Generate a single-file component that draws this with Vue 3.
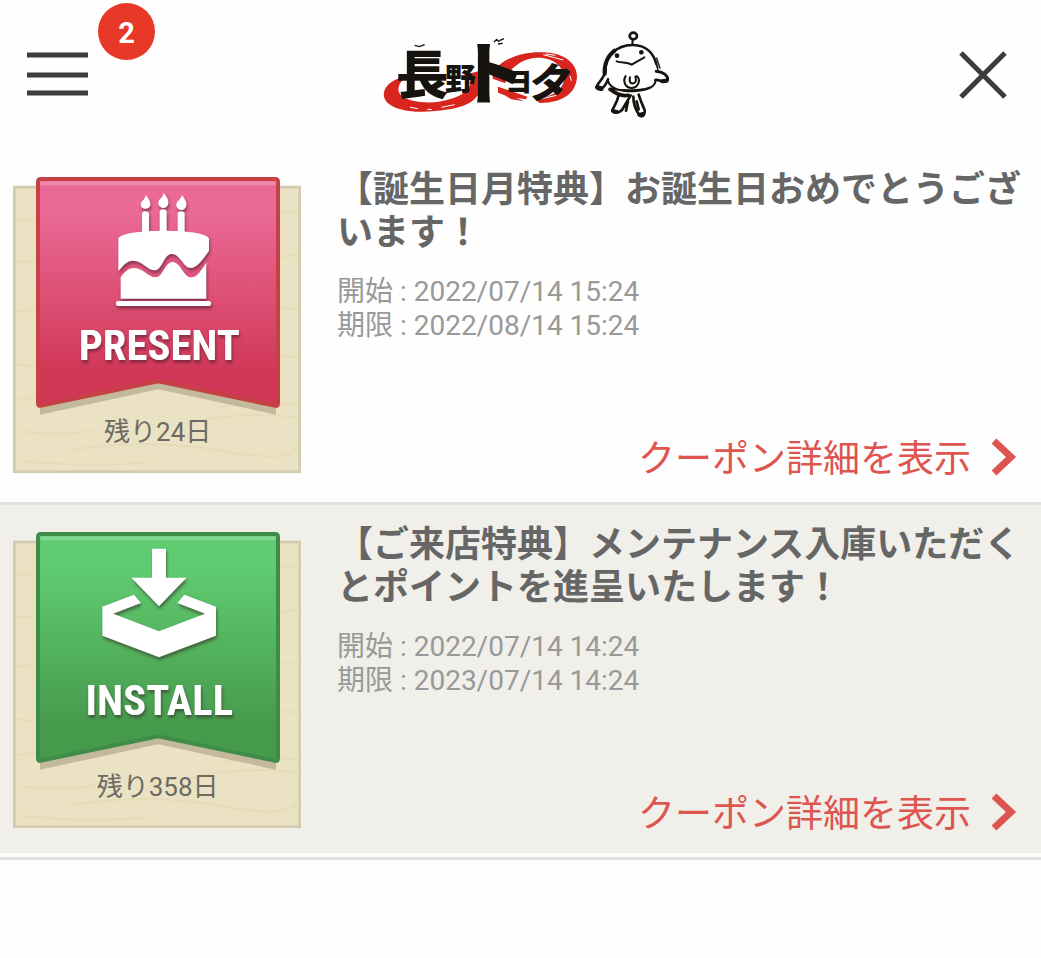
<template>
  <div class="page">
    <header class="header">
      <button class="icon-button" type="button" aria-label="メニュー">
        <svg width="61" height="46" viewBox="0 0 61 46" aria-hidden="true">
          <path d="M0 3h61M0 23h61M0 41h61" stroke="#3c3c3c" stroke-width="5" />
        </svg>
        <span class="count">2</span>
      </button>

      <svg class="logo" viewBox="12 0 897 330" role="img" aria-label="長野トヨタ">
        <g fill="#d8261f">
          <path d="M114 168C62 176 38 204 42 230C50 266 120 280 188 274C262 268 312 256 330 214L332 152L268 168L306 176L296 208C268 234 216 250 160 247C108 243 80 226 86 202C89 188 98 178 114 168Z" />
          <path d="M368 154C400 114 460 94 520 97C592 100 622 136 621 172C618 218 580 250 508 249L498 238C552 230 584 204 582 172C578 132 542 112 500 113C462 115 436 134 410 164L406 190L368 176Z" />
          <path d="M384 200L472 230L468 238L440 234L462 244L424 238L404 226L384 218Z" />
        </g>
        <g fill="none" stroke="#fff" stroke-width="3">
          <path d="M520 104L580 120M528 102L556 106M600 168l4 14M506 238L560 226M120 262l24 4M214 262l40-8M172 268l14 1" />
        </g>
        <g class="logo-text">
          <text x="78" y="222" font-size="158">長</text>
          <text x="225" y="210" font-size="92">野</text>
          <text x="262" y="238" font-size="206">ト</text>
          <text x="404" y="217" font-size="84">ヨ</text>
          <text x="468" y="234" font-size="124" font-style="italic">タ</text>
        </g>
        <path d="M134 76l14 4 16-6M372 66l8-8 8 8M388 62l14-6M384 72l14-2" fill="none" stroke="#17130f" stroke-width="4" />
        <g fill="none" stroke="#17130f" stroke-width="8" stroke-linecap="round" stroke-linejoin="round">
          <ellipse cx="790" cy="48" rx="11" ry="10" stroke-width="8" />
          <path d="M788 60L787 73" stroke-width="6" />
          <path d="M706 158C702 112 738 74 790 75C826 76 850 98 859 132" />
          <path d="M704 162C702 132 714 106 734 92" stroke-width="12" />
          <path d="M852 112l12 32M860 114l10 30M858 130l6 22" stroke-width="4" />
          <path d="M740 124C758 130 770 124 785 134L823 112" stroke-width="6" />
          <path d="M704 156C706 172 680 190 680 202C684 214 704 206 714 178" />
          <path d="M682 202l12 4" stroke-width="14" />
          <path d="M858 154C878 154 896 168 893 180C886 192 868 178 856 180" />
          <path d="M876 184l14-2" stroke-width="12" />
          <path d="M714 182C720 204 748 214 790 214C830 212 856 202 857 180M722 206C758 212 810 214 840 202" stroke-width="6" />
          <path d="M720 208C736 220 756 230 774 226" stroke-width="11" />
          <path d="M767 168C758 182 764 204 786 204C808 202 812 176 800 168M780 172C776 188 784 194 794 188C800 184 798 176 796 170" stroke-width="6" />
          <path d="M746 226C742 246 734 256 727 270C728 282 746 280 756 270L782 226M774 244L768 272" />
          <path d="M728 272l14 4" stroke-width="11" />
          <path d="M790 230C790 254 796 268 808 286C818 294 826 284 824 270C816 252 812 244 806 224M800 244l6 24" />
          <path d="M808 284l12-2" stroke-width="12" />
        </g>
        <circle cx="741" cy="107" r="7" fill="#17130f" />
        <circle cx="814" cy="97" r="7" fill="#17130f" />
      </svg>

      <button class="icon-button" type="button" aria-label="閉じる">
        <svg width="48" height="48" viewBox="0 0 48 48" aria-hidden="true">
          <path d="M2 2L46 46M46 2L2 46" stroke="#3c3c3c" stroke-width="5" />
        </svg>
      </button>
    </header>

    <main>
      <ul class="coupons">
        <li v-for="coupon in coupons" :key="coupon.kind" class="coupon">
          <article :class="['coupon__inner', `coupon--${coupon.kind}`]">
            <svg class="thumb" viewBox="39 49 864 888" role="img" :aria-label="coupon.label">
              <defs>
                <linearGradient :id="`fill-${coupon.kind}`" x1="0" y1="0" x2="0" y2="1">
                  <stop offset="0" :stop-color="coupon.colors[0]" />
                  <stop offset="0.15" :stop-color="coupon.colors[0]" />
                  <stop offset="0.85" :stop-color="coupon.colors[1]" />
                  <stop offset="1" :stop-color="coupon.colors[1]" />
                </linearGradient>
              </defs>
              <rect x="43" y="79" width="856" height="854" fill="#ebe2c4" stroke="#d3cab0" stroke-width="8" />
              <path class="grain" d="M48 180q30-8 60 0M48 300q30 10 60 0M48 455q30-10 60-2M48 610q30 8 60 2M842 150q26 10 50 0M842 290q26-12 50-2M842 440q26 12 50 0M842 590q26-8 50 4M50 720q90-24 200-8M60 810q100 18 220 0M200 870q240-40 460 0t230-14M560 790q150-40 330-20M60 900q200 20 380 6M660 740q120-20 230-8" />
              <path class="ribbon-shadow" d="M120 730V762L475 686L828 762V730L475 660Z" />
              <path
                d="M123 55H825Q834 55 834 64V728Q834 738 824 735L475 662L124 735Q114 738 114 728V64Q114 55 123 55Z"
                :fill="`url(#fill-${coupon.kind})`"
                :stroke="coupon.border"
                stroke-width="12"
              />
              <rect x="121" y="62" width="706" height="12" fill="#fff" opacity="0.22" />

              <g v-if="coupon.kind === 'present'" class="symbol">
                <path d="M437 103C450 118 452 128 451 134A15 15 0 0 1 422 132C422 120 436 118 437 103ZM491 96C504 112 506 122 505 128A15 15 0 0 1 475 126C475 114 490 112 491 96ZM545 103C558 118 560 128 559 134A15 15 0 0 1 529 132C529 120 544 118 545 103Z" />
                <path d="M426 160Q426 152 436 152Q447 152 447 160V216H426ZM479 154Q479 146 490 146Q500 146 500 154V216H479ZM533 160Q533 152 543 152Q554 152 554 160V216H533Z" />
                <path d="M355 235C356 202 626 202 627 235V270C608 298 590 322 572 322C550 322 540 280 516 280C490 280 488 329 464 329C442 329 426 300 400 300C378 300 368 318 355 332Z" />
                <path d="M362 350C376 330 388 322 402 322C430 322 446 350 466 350C490 350 494 304 518 304C542 304 550 350 574 350C592 350 604 328 619 306V414H362Z" />
                <rect x="348" y="421" width="285" height="15" rx="6" />
              </g>
              <g v-else class="symbol">
                <path d="M456 99H498V186H560L477 272L394 186H456Z" />
                <path d="M402 237L423 262L340 294L477 347L615 294L532 262L553 237L648 273V360L477 425L307 360V273Z" />
              </g>

              <text class="thumb-label" x="478" y="597">{{ coupon.label }}</text>
              <text class="thumb-days" x="473" y="842">{{ coupon.remaining }}</text>
            </svg>

            <div class="body">
              <h2 class="title">{{ coupon.title }}</h2>
              <p class="date">開始 : {{ coupon.start }}</p>
              <p class="date">期限 : {{ coupon.end }}</p>
              <a class="detail" href="#">
                クーポン詳細を表示
                <svg width="26" height="38" viewBox="0 0 26 38" aria-hidden="true">
                  <path d="M3 3L20 19L3 35" fill="none" stroke="#de544e" stroke-width="7" />
                </svg>
              </a>
            </div>
          </article>
        </li>
      </ul>
    </main>
  </div>
</template>

<script setup>
const coupons = [
  {
    kind: 'present',
    label: 'PRESENT',
    title: '【誕生日月特典】お誕生日おめでとうございます！',
    start: '2022/07/14 15:24',
    end: '2022/08/14 15:24',
    remaining: '残り24日',
    colors: ['#ea6996', '#d13857'],
    border: '#c64143'
  },
  {
    kind: 'install',
    label: 'INSTALL',
    title: '【ご来店特典】メンテナンス入庫いただくとポイントを進呈いたします！',
    start: '2022/07/14 14:24',
    end: '2023/07/14 14:24',
    remaining: '残り358日',
    colors: ['#60cb70', '#469a4c'],
    border: '#3f8c48'
  }
]
</script>

<style>
body {
  margin: 0;
  background: #fefefe;
}
</style>

<style scoped>
.page {
  font-family: Roboto, "Noto Sans CJK JP", sans-serif;
  color: #666666;
}

.header {
  display: flex;
  align-items: center;
  justify-content: space-between;
  height: 150px;
  padding: 0 34px 0 27px;
}

.icon-button {
  position: relative;
  display: flex;
  padding: 0;
  border: 0;
  background: none;
  cursor: pointer;
}

.count {
  position: absolute;
  left: 71px;
  bottom: 38px;
  width: 57px;
  height: 57px;
  border-radius: 50%;
  background: #e83828;
  color: #ffffff;
  font: 700 29px/60px Roboto, sans-serif;
  text-align: center;
}

.logo {
  width: 299px;
  height: 110px;
  overflow: visible;
}

.logo-text {
  fill: #17130f;
  font-family: "Noto Sans CJK JP", sans-serif;
  font-weight: 900;
}

.coupons {
  margin: 0;
  padding: 0;
  list-style: none;
}

.coupon {
  padding-bottom: 4px;
  border-bottom: 3px solid #e0e0e0;
}

.coupon__inner {
  display: flex;
  gap: 36px;
  padding: 17px 16px 17px 13px;
}

.coupon--install {
  background: #f0efea;
}

.thumb {
  flex: none;
  width: 288px;
  height: 296px;
  padding: 10px 0 8px;
}

.grain {
  fill: none;
  stroke: #e7dcb9;
  stroke-width: 6px;
}

.ribbon-shadow {
  fill: #c3b99c;
}

.symbol {
  fill: #ffffff;
  filter: drop-shadow(3px 8px 5px rgba(50, 20, 30, 0.5));
}

.thumb-label {
  fill: #ffffff;
  font-family: "Roboto Condensed", Roboto, sans-serif;
  font-size: 128px;
  font-weight: 700;
  text-anchor: middle;
  filter: drop-shadow(3px 8px 5px rgba(50, 20, 30, 0.5));
}

.thumb-days {
  fill: #6c6a62;
  font-size: 78px;
  text-anchor: middle;
}

.body {
  display: flex;
  flex: 1;
  flex-direction: column;
  min-width: 0;
}

.title {
  margin: 2px 0 20px;
  font-size: 36px;
  font-weight: 700;
  line-height: 43px;
}

.date {
  margin: 0;
  color: #999999;
  font-size: 28px;
  line-height: 34px;
}

.detail {
  display: flex;
  align-items: flex-start;
  align-self: flex-end;
  gap: 20px;
  margin-top: auto;
  padding-right: 8px;
  color: #de544e;
  font-size: 37px;
  line-height: 43px;
  text-decoration: none;
}
</style>
